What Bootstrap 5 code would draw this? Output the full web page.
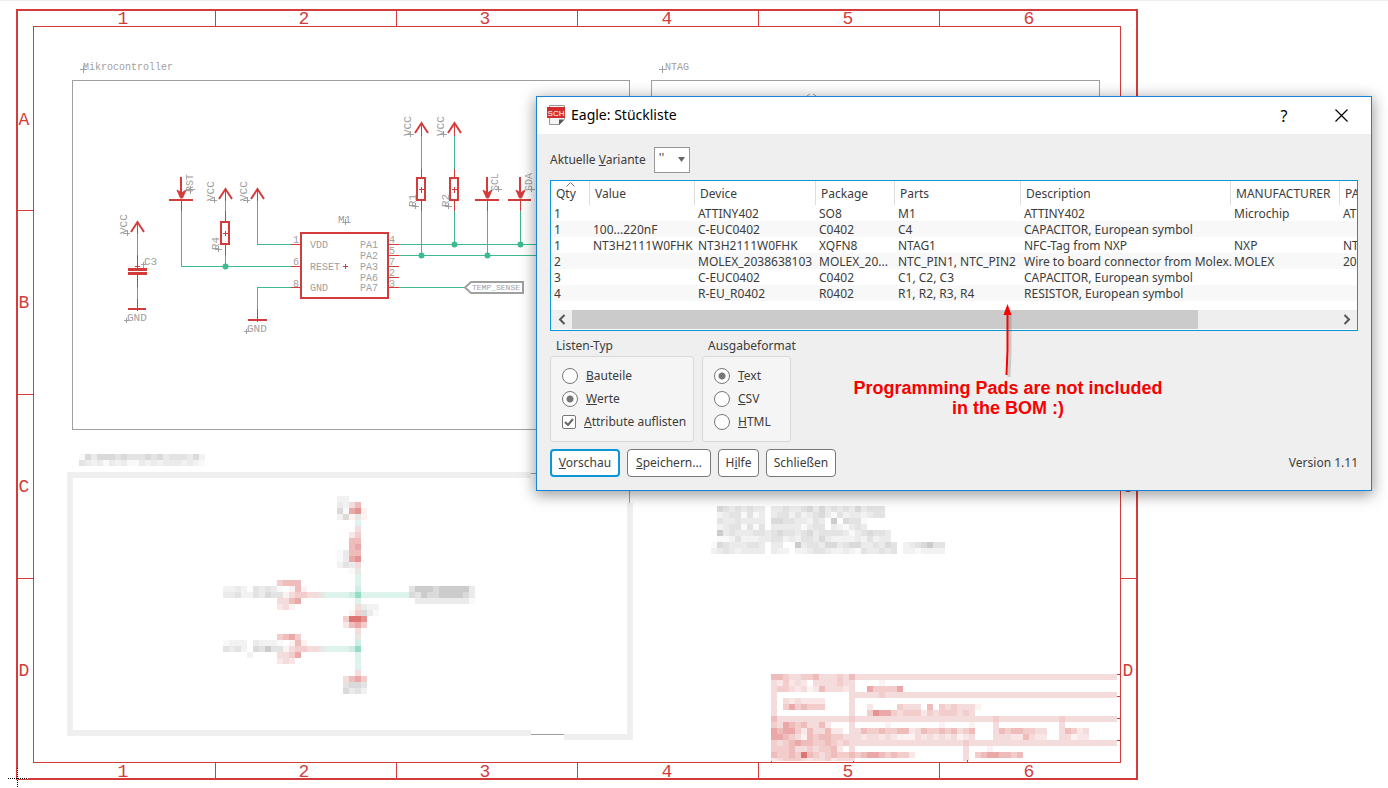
<!DOCTYPE html>
<html lang="de">
<head>
<meta charset="utf-8">
<meta name="viewport" content="width=device-width, initial-scale=1">
<title>Eagle: Stückliste</title>
<link href="https://cdn.jsdelivr.net/npm/bootstrap@5.3.0/dist/css/bootstrap.min.css" rel="stylesheet">
<style>
body{background:#fff;font-family:"Noto Sans","Open Sans",sans-serif;font-size:12px;line-height:16px;color:#3c3c3c;overflow-x:hidden}
.sheet{font-family:"Liberation Mono",monospace;font-size:10px;fill:#a0a0a0}
.sheet .wire,.sheet .part,.sheet .thin,.sheet .guide{fill:none;stroke-width:1}
.wire{stroke:#3dba91}
.part{stroke:#d43c3c}
.thin{stroke:#d43c3c}
.sheet .part{stroke-width:2}
.guide{stroke:#a0a0a0}
.coord{font-size:18px;fill:#d43c3c;text-anchor:middle}
.name{font-size:11px}
.net{font-size:8px}
.dlg{position:absolute;left:536px;top:96px;width:836px;background:#efefef;border:1px solid #1883d7;box-shadow:0 3px 14px 1px rgba(0,0,0,.4)}
.titlebar{height:37px;padding:0 10px;color:#000}
.titlebar h1{font-size:14px}
.titlebar button{width:24px;height:24px;font-size:16px;line-height:24px;color:#000}
.help-btn{margin-right:33px}
.dlg-body{padding:13px}
.variant{width:36px;height:26px;appearance:none;border:1px solid #999;background:#fff;padding:0 4px 4px;color:#3c3c3c}
.variant-arrow{right:5px;top:10px;pointer-events:none}
.list-box{border:1px solid #0a96d8;background:#fff;margin-top:7px}
.bom{table-layout:fixed;width:900px;margin:0;border-collapse:separate;border-spacing:0;line-height:14px}
.bom th{height:24px;padding:2px 0 0 5px;font-weight:400;border-right:1px solid #dedede;white-space:nowrap}
.bom td{height:16px;padding:2px 0 0 3px;white-space:nowrap}
.bom td:nth-child(4){overflow:hidden;text-overflow:ellipsis;padding-right:5px}
.bom tbody tr:nth-child(even){background:#f8f8f8}
.sort-mark{left:15px;top:1px}
.scroll-row{height:19px;margin:9px 0 1px;background:#efefef}
.scroll-row button{width:21px}
.scroll-thumb{background:#cbcbcb;width:82%}
.groups{margin-top:6px}
.group-name{padding-left:6px;line-height:18px;margin-bottom:1px}
.group-frame{height:86px;border:1px solid #d9d9d9;border-radius:3px;background:#f5f5f5;padding:7px 11px}
.choice{height:23px;gap:8px;white-space:nowrap}
.choice input{appearance:none;width:16px;height:16px;border:1px solid #777;border-radius:50%;background:#fff;margin:0;flex:none}
.choice input[type=radio]:checked{background:radial-gradient(circle,#777 0 3px,#fff 4px)}
.choice input[type=checkbox]{width:14px;height:14px;border-radius:2px}
.tick{left:2px;top:3px;pointer-events:none}
.actions{margin-top:7px}
.push{height:28px;border:1px solid #777;border-radius:4px;background:#fff;color:#3c3c3c;padding:0;line-height:16px;margin-right:7px}
.push.first{border:2px solid #0a96d8}
.note{left:853px;top:304px;width:310px;color:#f80000;font:bold 18px/20px "Liberation Sans",Arial,sans-serif;pointer-events:none}
</style>
</head>
<body>
<main class="position-relative">
<svg class="sheet d-block w-100" viewBox="0 0 1388 788" role="img" aria-label="Schaltplan">
  <path d="M0 .5H1388" stroke="#efefef"/>
  <g shape-rendering="crispEdges">
    <rect class="part" x="17" y="10" width="1120" height="769"/>
    <rect class="thin" x="33.5" y="26.5" width="1087" height="736"/>
    <path class="thin" d="M215.500 10v16M396.500 10v16M577.500 10v16M758.500 10v16M939.500 10v16M215.500 763v16M396.500 763v16M577.500 763v16M758.500 763v16M939.500 763v16M17 210.500h16M17 394.500h16M17 578.500h16M1121 210.500h16M1121 394.500h16M1121 578.500h16"/>
    <path class="guide" d="M72.500 80.500h557v349h-557zM651.500 429.500v-349h448v349"/>
  </g>
  <path class="guide" d="M807 96l3-2M813 94l3 2"/>
  <g class="coord">
    <text x="123" y="24">1</text><text x="304" y="24">2</text><text x="485" y="24">3</text><text x="667" y="24">4</text><text x="848" y="24">5</text><text x="1029" y="24">6</text>
    <text x="123" y="777">1</text><text x="304" y="777">2</text><text x="485" y="777">3</text><text x="667" y="777">4</text><text x="848" y="777">5</text><text x="1029" y="777">6</text>
    <text x="24" y="125">A</text><text x="24" y="308">B</text><text x="24" y="492">C</text><text x="24" y="676">D</text>
    <text x="1128" y="492">C</text><text x="1128" y="676">D</text>
  </g>
  <text x="83" y="70">Mikrocontroller</text><text x="665" y="70">NTAG</text>

  <g class="wire" shape-rendering="crispEdges">
    <path d="M181.500 211v55.500H291M225.500 201v10M225.500 255v11M257.500 201v43.500H291M291 287.500h-33.500V309M137.500 234v21M137.500 287v12"/>
    <path d="M399 244.500H540M399 255.500H540M399 287.500h67M421.500 136v33M421.500 211v44M454.500 136v33M454.500 211v33M487.500 211v44M520.500 211v33"/>
  </g>
  <g fill="#3dba91"><circle cx="225.500" cy="266.500" r="3"/><circle cx="454.500" cy="244.500" r="3"/><circle cx="520.500" cy="244.500" r="3"/><circle cx="421.500" cy="255.500" r="3"/><circle cx="487.500" cy="255.500" r="3"/></g>
  <g shape-rendering="crispEdges">
    <path class="part" d="M301 233h87v65h-87zM221 222h8v22h-8zM417 178h8v22h-8zM450 178h8v22h-8z"/>
    <path class="part" d="M169 200h24M475 200h24M508 200h23M181 177v20M487 177v20M520 177v20M128 309h18M248 320h19"/>
    <path d="M128 268h19v3h-19zM128 272h19v3h-19z" fill="#d43c3c"/>
    <path class="thin" d="M181.500 200v11M487.500 200v11M520.500 200v11M225.500 188v13M225.500 211v11M225.500 244v11M257.500 188v13M137.500 222v12M137.500 255v13M137.500 275v12M137.500 299v12M257.500 309v13M421.500 124v12M454.500 124v12M421.500 169v9M454.500 169v9M421.500 201v10M454.500 201v10"/>
    <path class="thin" d="M291 244.500h9M291 266.500h9M291 287.500h9M389 244.500h10M389 255.500h10M389 266.500h10M389 277.500h10M389 287.500h10"/>
    <path class="thin" d="M223 233.500h5M225.500 231v5M419 189.500h5M421.500 187v6M452 189.500h5M454.500 187v6M135 266.500h5M343 266.500h5M345.500 264v5"/>
  </g>
  <path class="part" d="M219 199l6.500-10 6.500 10M251 199l6.500-10 6.500 10M131 232l6.500-10 6.500 10M415 133l6.500-10 6.500 10M448 133l6.500-10 6.500 10"/>
  <path d="M177 190l4.500 3 4.500-3-3.500 8h-2zM483 190l4.500 3 4.500-3-3.500 8h-2zM516 190l4.500 3 4.500-3-3.500 8h-2z" fill="#d43c3c" stroke="#d43c3c"/>
  <path class="guide" shape-rendering="crispEdges" d="M80 69.500h7M83.500 66v7M659 69.500h7M662.500 66v7M141 264.500h5M143.500 262v6M124 320.500h5M126.500 318v5M244 331.500h5M246.500 329v5M342 222.500h8M345.500 219v6M186 189.500h9M190.500 186v8M210 200.500h7M214.500 197v6M243 200.500h7M247.500 197v6M123 233.500h7M127.500 230v6M407 134.500h7M410.500 131v6M440 134.500h7M443.500 131v6M215 249.500h7M218.500 246v6M412 206.500h7M415.500 203v6M445 206.500h7M448.500 203v6M495 189.500h7M498.500 186v6M528 189.500h7M531.500 186v6"/>
  <g class="name">
    <text x="144" y="265">C3</text><text x="127" y="321">GND</text><text x="247" y="332">GND</text><text x="338" y="223">M1</text>
    <text transform="translate(127 234) rotate(-90)">VCC</text><text transform="translate(214 201) rotate(-90)">VCC</text><text transform="translate(247 201) rotate(-90)">VCC</text>
    <text transform="translate(411 136) rotate(-90)">VCC</text><text transform="translate(444 136) rotate(-90)">VCC</text>
    <text transform="translate(219 250) rotate(-90)">R4</text><text transform="translate(416 207) rotate(-90)">R1</text><text transform="translate(449 207) rotate(-90)">R2</text>
  </g>
  <text transform="translate(193 192) rotate(-90)">RST</text><text transform="translate(498 191) rotate(-90)">SCL</text><text transform="translate(532 191) rotate(-90)">SDA</text>
  <text x="310" y="248">VDD</text><text x="310" y="270">RESET</text><text x="310" y="291">GND</text>
  <text x="360" y="248">PA1</text><text x="360" y="259">PA2</text><text x="360" y="270">PA3</text><text x="360" y="281">PA6</text><text x="360" y="291">PA7</text>
  <text x="293" y="243">1</text><text x="293" y="265">6</text><text x="293" y="287">8</text>
  <text x="389" y="243">4</text><text x="389" y="254">5</text><text x="389" y="265">7</text><text x="389" y="276">2</text><text x="389" y="287">3</text>
  <path d="M465 287.500l6-5.500h52v11h-52z" fill="none" stroke="#a0a0a0" stroke-width="2"/>
  <text class="net" x="472" y="290">TEMP_SENSE</text>

  <g shape-rendering="crispEdges">
    <path d="M67 472h464v6H73v252h458v6H67zM564 734h63V503h6v237h-69z" fill="#efefef"/>
    <path class="guide" d="M531 473.500h10M629.500 485v18M531 734.500h33"/>
    <path d="M771 674h346v6H771zM771 680h6v81h-6zM849 680h6v81h-6zM855 692h262v6H855zM777 716h340v6H777zM777 740h340v6H777zM993 722h6v18h-6zM1059 722h6v18h-6zM963 746h6v15h-6z" fill="#f5dcdc"/>
    <path class="thin" d="M1117 674.500h4M1117 696.500h4M1117 718.500h4M1117 740.500h4M771.500 760v3M853.500 760v3M967.500 760v3"/>
    <g id="mosaic"></g>
    <path d="M8 778.500h20M17.500 768v20" stroke="#fff"/>
    <path d="M8 778.500h20M17.500 768v20" stroke="#000" stroke-dasharray="1 1"/>
  </g>
</svg>

<section class="dlg" role="dialog" aria-labelledby="dlg-title">
  <header class="titlebar bg-white d-flex align-items-center">
    <svg width="20" height="22" viewBox="0 0 20 22" class="me-1" aria-hidden="true">
      <path d="M2.500 .5h15v14l-5 5h-10z" fill="#f4f4f4" stroke="#999"/><path d="M17 14.500h-5V20z" fill="#555"/><rect y="2" width="18" height="11" fill="#d22d2d"/>
      <text x="9" y="11" text-anchor="middle" font-family="Liberation Sans" font-size="8" fill="#fff">SCH</text>
    </svg>
    <h1 id="dlg-title" class="m-0 me-auto fw-normal">Eagle: Stückliste</h1>
    <button class="help-btn btn p-0 border-0 rounded-0" aria-label="Hilfe">?</button>
    <button class="btn p-0 border-0 rounded-0 me-2 d-flex align-items-center justify-content-center" aria-label="Schließen"><svg width="13" height="13" viewBox="0 0 13 13"><path d="M.5.500l12 12M12.500.500l-12 12" stroke="#000" stroke-width="1.200"/></svg></button>
  </header>
  <div class="dlg-body">
    <div class="d-flex align-items-center">
      <label for="variant" class="me-2">Aktuelle <u>V</u>ariante</label>
      <div class="position-relative d-flex">
        <select id="variant" class="variant"><option>''</option></select>
        <svg class="variant-arrow position-absolute" width="7" height="6" viewBox="0 0 7 6" aria-hidden="true"><path d="M0 0h7L3.500 5z" fill="#666"/></svg>
      </div>
    </div>
    <div class="list-box">
      <div class="overflow-hidden">
        <table class="bom">
          <colgroup><col style="width:39px"><col style="width:105px"><col style="width:121px"><col style="width:79px"><col style="width:126px"><col style="width:210px"><col style="width:109px"><col></colgroup>
          <thead><tr><th class="position-relative">Qty<svg class="sort-mark position-absolute" width="9" height="5" viewBox="0 0 9 5" aria-hidden="true"><path d="M.5 4.500l4-4 4 4" fill="none" stroke="#777"/></svg></th><th>Value</th><th>Device</th><th>Package</th><th>Parts</th><th>Description</th><th>MANUFACTURER</th><th>PARTNO</th></tr></thead>
          <tbody>
            <tr><td>1</td><td></td><td>ATTINY402</td><td>SO8</td><td>M1</td><td>ATTINY402</td><td>Microchip</td><td>ATTINY402</td></tr>
            <tr><td>1</td><td>100...220nF</td><td>C-EUC0402</td><td>C0402</td><td>C4</td><td>CAPACITOR, European symbol</td><td></td><td></td></tr>
            <tr><td>1</td><td>NT3H2111W0FHK</td><td>NT3H2111W0FHK</td><td>XQFN8</td><td>NTAG1</td><td>NFC-Tag from NXP</td><td>NXP</td><td>NT3H2111W0FHK</td></tr>
            <tr><td>2</td><td></td><td>MOLEX_2038638103</td><td>MOLEX_20...</td><td>NTC_PIN1, NTC_PIN2</td><td>Wire to board connector from Molex.</td><td>MOLEX</td><td>2038638103</td></tr>
            <tr><td>3</td><td></td><td>C-EUC0402</td><td>C0402</td><td>C1, C2, C3</td><td>CAPACITOR, European symbol</td><td></td><td></td></tr>
            <tr><td>4</td><td></td><td>R-EU_R0402</td><td>R0402</td><td>R1, R2, R3, R4</td><td>RESISTOR, European symbol</td><td></td><td></td></tr>
          </tbody>
        </table>
      </div>
      <div class="scroll-row d-flex">
        <button class="btn p-0 border-0 rounded-0 d-flex align-items-center justify-content-center" aria-label="Nach links"><svg width="8" height="11" viewBox="0 0 8 11"><path d="M6.500 1L2 5.500 6.500 10" fill="none" stroke="#555" stroke-width="2"/></svg></button>
        <div class="flex-grow-1"><div class="scroll-thumb h-100"></div></div>
        <button class="btn p-0 border-0 rounded-0 d-flex align-items-center justify-content-center" aria-label="Nach rechts"><svg width="8" height="11" viewBox="0 0 8 11"><path d="M1.500 1L6 5.500 1.500 10" fill="none" stroke="#555" stroke-width="2"/></svg></button>
      </div>
    </div>
    <div class="groups d-flex gap-2">
      <div style="width:144px">
        <div class="group-name">Listen-Typ</div>
        <div class="group-frame">
          <label class="choice d-flex align-items-center"><input type="radio" name="typ"><span><u>B</u>auteile</span></label>
          <label class="choice d-flex align-items-center"><input type="radio" name="typ" checked><span><u>W</u>erte</span></label>
          <label class="choice d-flex align-items-center"><span class="position-relative d-flex"><input type="checkbox" checked><svg class="tick position-absolute" width="10" height="8" viewBox="0 0 10 8"><path d="M1 4l3 3 5-6" fill="none" stroke="#666" stroke-width="2"/></svg></span><span><u>A</u>ttribute auflisten</span></label>
        </div>
      </div>
      <div style="width:89px">
        <div class="group-name text-nowrap">Ausgabeformat</div>
        <div class="group-frame">
          <label class="choice d-flex align-items-center"><input type="radio" name="format" checked><span><u>T</u>ext</span></label>
          <label class="choice d-flex align-items-center"><input type="radio" name="format"><span><u>C</u>SV</span></label>
          <label class="choice d-flex align-items-center"><input type="radio" name="format"><span><u>H</u>TML</span></label>
        </div>
      </div>
    </div>
    <footer class="actions d-flex align-items-center">
      <button class="push first" style="width:70px"><u>V</u>orschau</button>
      <button class="push" style="width:84px"><u>S</u>peichern...</button>
      <button class="push" style="width:41px">H<u>i</u>lfe</button>
      <button class="push" style="width:70px">Schließen</button>
      <span class="ms-auto">Version 1.11</span>
    </footer>
  </div>
</section>

<div class="note position-absolute d-flex flex-column align-items-center">
  <svg width="16" height="74" viewBox="0 0 16 74" aria-hidden="true">
    <path d="M10 10v40l-1 23" fill="none" stroke="#000" stroke-opacity=".15" stroke-width="3"/>
    <path d="M7.500 8v38l-1 25" fill="none" stroke="#f80000" stroke-width="2"/><path d="M7.500 0l4 11h-8z" fill="#f80000"/>
  </svg>
  <p class="m-0 text-nowrap text-center">Programming Pads are not included<br>in the BOM :)</p>
</div>
</main>
<script src="https://cdn.jsdelivr.net/npm/bootstrap@5.3.0/dist/js/bootstrap.bundle.min.js"></script>
<script>
// Pixelated areas of the sheet: each character is one 6px cell, each string one row.
const shades = {1:'#f9f9f9',2:'#f2f2f2',3:'#ebebeb',4:'#e3e3e3',5:'#dadada',6:'#cccccc',
  a:'#fcf2f2',b:'#f9e7e7',c:'#f5dcdc',d:'#f3cccc',e:'#efbcbc',f:'#eaa8a8',g:'#e79292',h:'#dd7474',
  p:'#def3ec',q:'#cdeee2',r:'#96dcc4',w:'#e7e8e3'};
const blocks = [
  {x:79,y:454,rows:['153555454445453444352','432313231132323332321']},
  {x:337,y:496,rows:['22','32ce','51fga','25awa','...p','...c','..bd','..ee','..ef','13ee','13fg','243c','..1w','...p','...p','...q','...rpppppppp','...p','...c322','..ad531','.dhhg','.befd','...c','...w','...q','...r','...p','...p','...p','...c','.cefd','.4554','.5342']},
  {x:223,y:580,rows:['.........deee','2232.43431.aea','3342243544acddccwppppq','.........ccef','.........bca']},
  {x:223,y:634,rows:['.........defd','1222.32221.aea','4342.54644acddccwppppq','....2....ccdf','.........bcb']},
  {x:409,y:586,rows:['46665666663','54655666653','.3333333331']},
  {x:711,y:506,rows:['.54343433.3343345353434353444','.23441413.3442423453142332344','.43343333.554433243.6.5441','.23441414.333331344.321343','.63433344345443453444431345443','.11242223344232443532222324233','154333443.33..63443553455334354.2345644','234323333.322.22344322321433434.2212222']},
  {x:771,y:674,rows:['eedccddecccdce','cbdbcb.ccccdcc....a','cddcbcabecccbc..fddddf','..................d','..cbcbbbb','..dfdeddd.......b....dccc.e.dcdccca','................dgffdcdddbdcdddcdc','e............d.......................d..........d','dcfedecceb...c.....a........a....a','feffdbeccebb.cceddeddeebceddedecde....edeeddcc...edbc','ffedcaedeeddcccbccbcbaaacbcbcbcabc....ccbbecbb...cabb','dcdefeeddedcdc..................d','dddeccdcddeb.c......................a','eddedhedcdeddedeffededdb..........deffeede']},
  {x:771,y:758,h:3,rows:['bcdddcbccdbccc']}
];
const layer = document.getElementById('mosaic');
for (const b of blocks) b.rows.forEach((row, j) => [...row].forEach((key, i) => {
  if (!shades[key]) return;
  const cell = document.createElementNS('http://www.w3.org/2000/svg', 'rect');
  const box = {x:b.x + 6 * i, y:b.y + 6 * j, width:6, height:b.h || 6, fill:shades[key]};
  for (const k in box) cell.setAttribute(k, box[k]);
  layer.append(cell);
}));
</script>
</body>
</html>
